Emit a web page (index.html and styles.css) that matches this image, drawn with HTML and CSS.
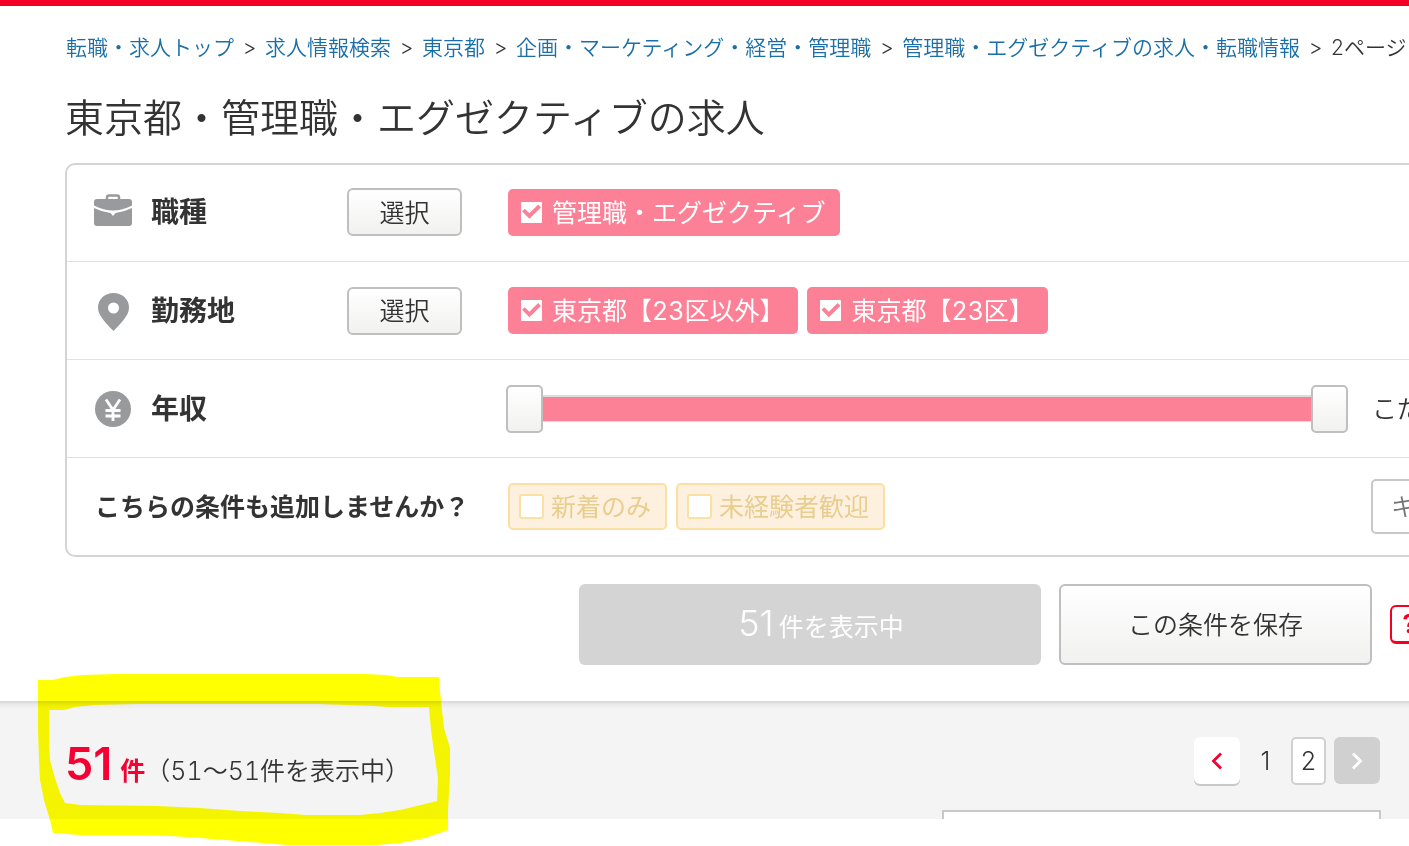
FILE: index.html
```
<!DOCTYPE html>
<html lang="ja">
<head>
    <meta charset="UTF-8">
    <meta name="viewport" content="width=device-width, initial-scale=1.0">
    <title>東京都・管理職・エグゼクティブの求人</title>
    <link rel="stylesheet" href="styles.css">
</head>
<body>
    <header class="container">
        <nav class="breadcrumb" aria-label="パンくずリスト">
            <a href="#">転職・求人トップ</a>
            <span class="sep">&gt;</span>
            <a href="#">求人情報検索</a>
            <span class="sep">&gt;</span>
            <a href="#">東京都</a>
            <span class="sep">&gt;</span>
            <a href="#">企画・マーケティング・経営・管理職</a>
            <span class="sep">&gt;</span>
            <a href="#">管理職・エグゼクティブの求人・転職情報</a>
            <span class="sep">&gt;</span>
            <span>2ページ目</span>
        </nav>
        <h1>東京都・管理職・エグゼクティブの求人</h1>
    </header>

    <form class="container search">
        <div class="panel">
            <div class="row">
                <div class="row-title">
                    <svg class="icon" width="40" height="40" viewBox="0 0 40 40" aria-hidden="true">
                        <path d="M14 8V5.500Q14 3.500 16 3.500H24Q26 3.500 26 5.500V8" fill="none" stroke="#999a9c" stroke-width="2.500"/>
                        <path d="M1 10Q1 7 4 7H36Q39 7 39 10V13.500Q29 18.500 20 18.500Q11 18.500 1 13.500Z" fill="#999a9c"/>
                        <path d="M1 16Q9 20 17.500 21L20 24L22.500 21Q31 20 39 16V31Q39 34 36 34H4Q1 34 1 31Z" fill="#999a9c"/>
                    </svg>
                    <h2>職種</h2>
                </div>
                <button type="button" class="btn select-btn">選択</button>
                <div class="tags">
                    <label class="tag tag-on"><input type="checkbox" checked><span>管理職・エグゼクティブ</span></label>
                </div>
            </div>
            <div class="row">
                <div class="row-title">
                    <svg class="icon" width="40" height="40" viewBox="0 0 40 40" aria-hidden="true">
                        <path fill-rule="evenodd" d="M20.500 2C11.500 2 5 8.500 5 16.500C5 24 11 30 20.500 40C30 30 36 24 36 16.500C36 8.500 29.500 2 20.500 2ZM20.500 11.500A5.500 5.500 0 1 1 20.500 22.500A5.500 5.500 0 1 1 20.500 11.500Z" fill="#999a9c"/>
                    </svg>
                    <h2>勤務地</h2>
                </div>
                <button type="button" class="btn select-btn">選択</button>
                <div class="tags">
                    <label class="tag tag-on"><input type="checkbox" checked><span>東京都【23区以外】</span></label>
                    <label class="tag tag-on"><input type="checkbox" checked><span>東京都【23区】</span></label>
                </div>
            </div>
            <div class="row">
                <div class="row-title wide">
                    <svg class="icon" width="40" height="40" viewBox="0 0 40 40" aria-hidden="true">
                        <circle cx="20" cy="20" r="18" fill="#999a9c"/>
                        <path d="M13 10.500L20 21L27 10.500M20 21V32M12.500 21.500H27.500M12.500 27H27.500" fill="none" stroke="#fff" stroke-width="2.800"/>
                    </svg>
                    <h2>年収</h2>
                </div>
                <div class="slider">
                    <input type="range" min="0" max="100" value="0" aria-label="年収の下限">
                    <input type="range" min="0" max="100" value="100" aria-label="年収の上限">
                </div>
                <span class="salary">こだわらない</span>
            </div>
            <div class="row">
                <div class="row-title wide add">こちらの条件も追加しませんか？</div>
                <div class="tags">
                    <label class="tag tag-off"><input type="checkbox"><span>新着のみ</span></label>
                    <label class="tag tag-off"><input type="checkbox"><span>未経験者歓迎</span></label>
                </div>
                <input type="text" class="keyword" placeholder="キーワード" aria-label="キーワード">
            </div>
        </div>
        <div class="actions">
            <button type="submit" class="show-btn" disabled><span class="num">51</span>件を表示中</button>
            <button type="button" class="btn save-btn">この条件を保存</button>
            <button type="button" class="help-btn" aria-label="ヘルプ">?</button>
        </div>
    </form>

    <section class="results">
        <div class="result-bar">
            <p class="count"><strong><span class="total">51</span>件</strong>（51～51件を表示中）</p>
            <nav class="pager" aria-label="ページ">
                <a class="arrow prev" href="#" aria-label="前のページ">
                    <svg width="12" height="18" viewBox="0 0 12 18"><path d="M10 1.500L2.500 9L10 16.500" fill="none" stroke="#f50032" stroke-width="2.800"/></svg>
                </a>
                <a class="page" href="#">1</a>
                <span class="page current">2</span>
                <span class="arrow next">
                    <svg width="12" height="18" viewBox="0 0 12 18"><path d="M2 1.500L9.500 9L2 16.500" fill="none" stroke="#fff" stroke-width="2.800"/></svg>
                </span>
            </nav>
        </div>
        <div class="side-box"></div>
        <!-- hand-drawn marker around the result count -->
        <svg class="marker" width="412" height="172" viewBox="38 674 412 172" aria-hidden="true">
            <path fill="#ff0" fill-rule="evenodd" d="M38 680L52 680L65 677L82 675L116 674H365L386 675L398 677H439L440 692L442 710L444 728L447 738L450 748V775L448 810V830L440 833L425 838L400 843L377 845H287L250 842L200 838L170 836L140 835H80L53 833L50 820L44 800L40 780L39 760L38 730Z
            M49 710H64L75 707L95 705L137 704H318L375 706L388 707H429L431 730L433 745L436 765L438 778L437 801L425 804L400 810L380 813L360 815H306L280 813L240 811L200 808L157 806L80 805L65 803L60 793L54 775L50 760L49 745Z"/>
        </svg>
    </section>
</body>
</html>
```

FILE: styles.css
```
* {
    box-sizing: border-box;
}
html {
    background: #fff;
}
body {
    margin: 0;
    min-height: 100vh;
    border-top: 6px solid #f50025;
    background: #fff;
    color: #333;
    font-family: Inter, "Noto Sans CJK JP", sans-serif;
    font-size: 25px;
    font-weight: 350;
    overflow-x: clip;
}
button, input {
    font: inherit;
    color: inherit;
}
.container {
    padding-left: 65px;
}
.breadcrumb {
    display: flex;
    padding-top: 26px;
    padding-left: 1px;
    font-size: 21px;
    line-height: 32px;
    white-space: nowrap;
}
.breadcrumb a {
    color: #1a6fa8;
    text-decoration: none;
}
.sep {
    width: 31px;
    flex-shrink: 0;
    text-align: center;
}
h1 {
    margin: 24px 0 15px;
    font-size: 39px;
    font-weight: 350;
    line-height: 60px;
}

/* search conditions */
.search {
    margin-right: -60px;
}
.panel {
    border: 2px solid #d4d4d4;
    border-radius: 10px;
}
.row {
    display: grid;
    grid-template-columns: 254px 161px 1fr 96px;
    align-items: center;
    height: 98px;
    padding-left: 26px;
    border-bottom: 1px solid #e2e2e2;
}
.row:first-child {
    height: 97px;
    padding-bottom: 2px;
}
.row:last-child {
    height: 97px;
    border-bottom: none;
}
.row-title {
    display: flex;
    align-items: center;
    gap: 18px;
}
.wide {
    grid-column: span 2;
}
h2 {
    margin: 0;
    font-size: 28px;
    font-weight: 700;
    line-height: 40px;
}
.add {
    padding-left: 2px;
    padding-bottom: 3px;
    font-weight: 700;
}
.btn {
    padding: 0 0 3px;
    border: 2px solid #bfbfbf;
    border-radius: 6px;
    background: linear-gradient(#fff, #f1f1f0);
    cursor: pointer;
}
.select-btn {
    width: 115px;
    height: 48px;
}
.tags {
    display: flex;
    gap: 9px;
}
.tag {
    display: flex;
    align-items: center;
    height: 47px;
    padding-right: 14px;
    border-radius: 5px;
    font-variant-numeric: tabular-nums;
    white-space: nowrap;
    cursor: pointer;
}
.tag span {
    padding-bottom: 3px;
}
.tag input {
    appearance: none;
    margin: 0;
    background: #fff;
}
.tag-on {
    padding-left: 13px;
    gap: 10px;
    background: #fc8196;
    color: #fff;
    font-weight: 400;
}
.tag-on input {
    width: 21px;
    height: 21px;
    border-radius: 1px;
}
.tag-on input:checked::before {
    content: "";
    display: block;
    height: 21px;
    background: #fc8196;
    clip-path: polygon(5% 47%, 18% 34%, 40% 56%, 82% 14%, 95% 28%, 40% 82%);
}
.tag-off {
    padding-left: 9px;
    gap: 7px;
    border: 2px solid #fae1a3;
    background: #fdf0df;
    color: #e8ce8e;
    font-weight: 400;
}
.tag-off input {
    width: 25px;
    height: 25px;
    border: 2px solid #fae1a3;
    border-radius: 3px;
}

/* salary range, both inputs share one grid cell */
.slider {
    display: grid;
    align-items: center;
    margin-left: -2px;
    margin-right: 23px;
    background: linear-gradient(#dcdcdc 2px, #fc8196 2px, #fc8196 26px, #dcdcdc 26px) center / 100% 27px no-repeat;
}
.slider input {
    grid-area: 1 / 1;
    appearance: none;
    width: 100%;
    height: 48px;
    margin: 0;
    background: none;
    pointer-events: none;
}
.slider input::-webkit-slider-thumb {
    appearance: none;
    width: 37px;
    height: 48px;
    border: 2px solid #bfbfbf;
    border-radius: 5px;
    background: linear-gradient(#fff, #f1f1f0);
    pointer-events: auto;
}
.salary {
    padding-left: 1px;
    padding-bottom: 3px;
    white-space: nowrap;
}
.keyword {
    width: 100%;
    height: 55px;
    padding: 0 18px;
    border: 2px solid #c8c8c8;
    border-radius: 5px;
    background: #fff;
}
.keyword::placeholder {
    color: #757575;
}

.actions {
    display: flex;
    justify-content: flex-end;
    align-items: center;
    gap: 18px;
    padding: 27px 40px 36px 0;
}
.show-btn {
    width: 462px;
    height: 81px;
    padding: 0 0 3px 22px;
    border: none;
    border-radius: 6px;
    background: #d4d4d4;
    color: #fff;
    font-weight: 400;
}
.num {
    margin-right: 5px;
    font-size: 36px;
    font-weight: 350;
}
.save-btn {
    width: 313px;
    height: 81px;
}
.help-btn {
    width: 39px;
    height: 39px;
    padding: 0;
    border: 2px solid #f50025;
    border-bottom-width: 3px;
    border-radius: 6px;
    background: #fff;
    color: #f50025;
    font-weight: 700;
}

/* results */
.results {
    position: relative;
    padding: 34px 28px 0 65px;
    border-top: 2px solid #dcdcdc;
    background: linear-gradient(#e6e6e6, #f4f4f4 6px);
}
.result-bar {
    display: flex;
    justify-content: space-between;
    height: 73px;
}
.count {
    margin: 0;
    font-variant-numeric: tabular-nums;
    line-height: 54px;
}
.count strong {
    color: #f50032;
    font-weight: 700;
}
.total {
    margin-right: 8px;
    font-size: 45px;
    font-variant-numeric: normal;
    font-weight: 600;
}
.pager {
    display: flex;
    align-items: flex-start;
    gap: 8px;
    padding-right: 1px;
}
.arrow {
    display: flex;
    align-items: center;
    justify-content: center;
    width: 46px;
    height: 47px;
    border-radius: 6px;
}
.prev {
    background: #fff;
    box-shadow: 0 2px 0 #c8c8c8;
}
.next {
    background: #d0d0d0;
}
.page {
    width: 35px;
    height: 48px;
    color: #333;
    line-height: 48px;
    text-align: center;
    text-decoration: none;
}
.current {
    border: 2px solid #d0d0d0;
    border-radius: 5px;
    background: #fff;
    line-height: 44px;
}
.side-box {
    width: 439px;
    height: 9px;
    margin-left: auto;
    border: 2px solid #c8c8c8;
    border-bottom: none;
    background: #fff;
}
.marker {
    position: absolute;
    top: -29px;
    left: 38px;
    mix-blend-mode: multiply;
    pointer-events: none;
}
```
